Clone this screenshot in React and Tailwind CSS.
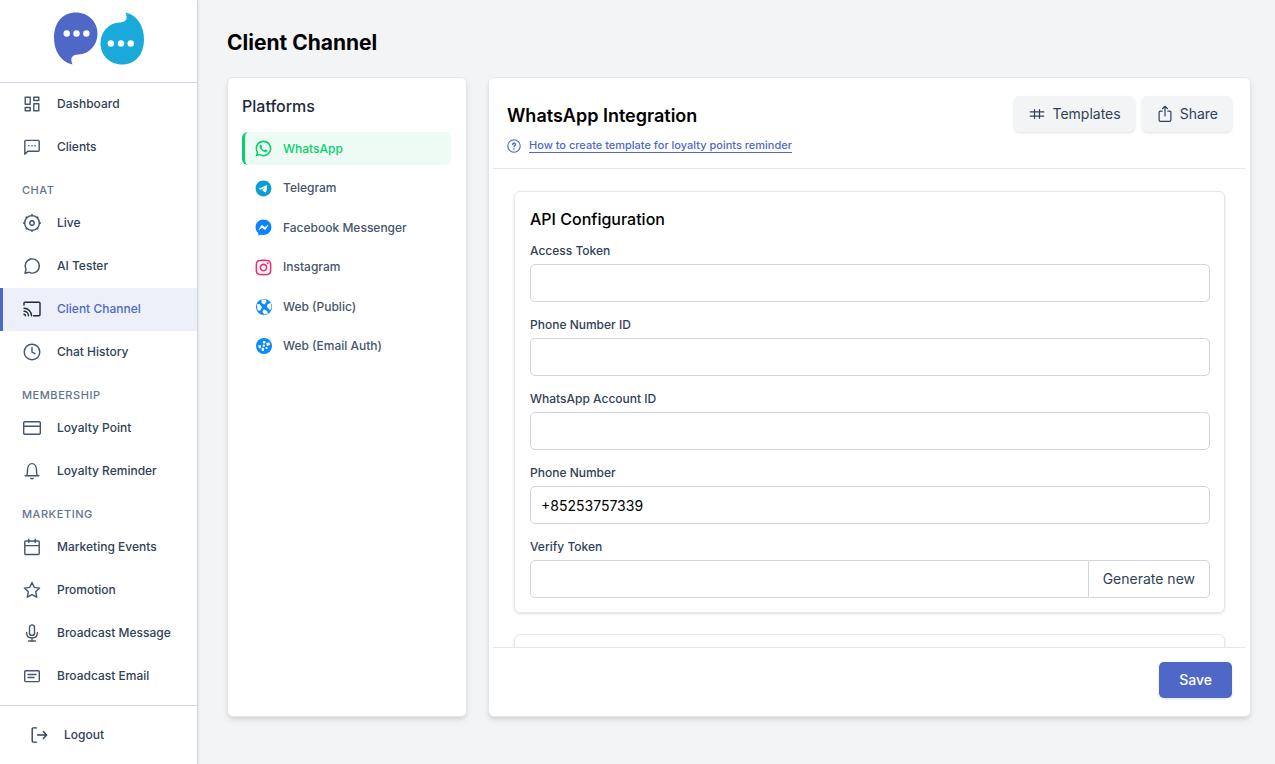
import { useState } from 'react';
import { RiWhatsappLine, RiTelegramFill, RiMessengerFill, RiInstagramLine } from 'react-icons/ri';

function Icon({ children, size = 18 }) {
  return (
    <svg width={size} height={size} viewBox="0 0 18 18" fill="none" stroke="currentColor" strokeWidth="1.4" strokeLinecap="round" strokeLinejoin="round" className="shrink-0" aria-hidden="true">
      {children}
    </svg>
  );
}

const DashboardIcon = () => (
  <Icon>
    <path d="M2.2 2.2h5v7h-5zM10.8 2.2h5v3.3h-5zM10.8 8.8h5v7h-5zM2.2 12.5h5v3.3h-5z" />
  </Icon>
);

const ClientsIcon = () => (
  <Icon>
    <path d="M1.8 16.2V3.4c0-.6.4-1 1-1h12.4c.6 0 1 .4 1 1v8.8c0 .6-.4 1-1 1H4.8z" />
    <path d="M5.8 7.8h.2M8.9 7.8h.2M12 7.8h.2" />
  </Icon>
);

const LiveIcon = () => (
  <Icon>
    <circle cx="9" cy="9" r="7.4" />
    <circle cx="9" cy="9" r="2.2" />
    <path strokeWidth="1.8" d="M9 .9v.6M9 16.5v.6M.9 9h.6M16.5 9h.6M3.3 3.3l.3.3M14.4 14.4l.3.3M14.7 3.3l-.3.3M3.6 14.4l-.3.3" />
  </Icon>
);

const TesterIcon = () => (
  <Icon>
    <path d="M2 16.2l1-3.8A7.1 7.1 0 1 1 5.8 15.2z" />
  </Icon>
);

const CastIcon = () => (
  <Icon>
    <path d="M1 5V3.3c0-.6.4-1 1-1h14c.6 0 1 .4 1 1v11.4c0 .6-.4 1-1 1h-5.5" />
    <path d="M1 8.2a7.5 7.5 0 0 1 7.5 7.5M1 11.3a4.4 4.4 0 0 1 4.4 4.4M1 14.3a1.5 1.5 0 0 1 1.4 1.4" />
  </Icon>
);

const HistoryIcon = () => (
  <Icon>
    <circle cx="9" cy="9" r="7.8" />
    <path d="M9 4.5V9.2l3 1.5" />
  </Icon>
);

const CardIcon = () => (
  <Icon>
    <rect x="0.7" y="2.7" width="16.6" height="12.6" rx="1" />
    <path d="M.7 7.2h16.6" />
  </Icon>
);

const BellIcon = () => (
  <Icon>
    <path d="M2.2 13.7h13.6M3.9 13.5c.6-1.7.6-3.5.6-5.5C4.5 4 6.5 1.6 9 1.6S13.5 4 13.5 8c0 2 0 3.800.6 5.500M7.700 16.300c.7.500 1.900.5 2.600 0" />
  </Icon>
);

const CalendarIcon = () => (
  <Icon>
    <rect x="1.8" y="3" width="14.4" height="13.5" rx="1" />
    <path d="M1.8 7.6h14.4M5.8 1.2v3.4M12.2 1.2v3.4" />
  </Icon>
);

const StarIcon = () => (
  <Icon>
    <path d="M9 1.5l2.3 4.9 5.3.7-3.9 3.7 1 5.4L9 13.600l-4.700 2.600 1-5.400L1.400 7.100l5.300-.7z" />
  </Icon>
);

const MicIcon = () => (
  <Icon>
    <rect x="6.5" y=".9" width="5" height="10.6" rx="2.5" />
    <path d="M3.6 8.5c0 3.7 2.1 5.5 5.4 5.5s5.4-1.800 5.400-5.500M9 14v2.800M5.600 17h6.800" />
  </Icon>
);

const EmailIcon = () => (
  <Icon>
    <rect x="1.7" y="3.7" width="14.6" height="10.9" rx="1" />
    <path d="M5 7.5h8M5 10.5h6" />
  </Icon>
);

const LogoutIcon = () => (
  <Icon>
    <path d="M6.5 1.9H3.2c-.6 0-1 .4-1 1v12.2c0 .6.4 1 1 1h3.300M7.500 9h9M13.300 5.600L16.700 9l-3.400 3.400" />
  </Icon>
);

const TemplatesIcon = () => (
  <Icon>
    <path strokeWidth="1.2" d="M2.2 6.9h13.6M2.2 11.1h13.6M6.5 4.7v8.6M11.5 4.7v8.6" />
  </Icon>
);

const ShareIcon = () => (
  <Icon>
    <path strokeWidth="1.2" d="M6.2 6.1H4.4c-.8 0-1.3.5-1.3 1.3v7.7c0 .8.5 1.3 1.3 1.3h9.2c.8 0 1.3-.5 1.300-1.300V7.400c0-.8-.5-1.300-1.300-1.300h-1.800M9 11V1.400M6.500 3.700L9 1.300l2.500 2.400" />
  </Icon>
);

const HelpIcon = () => (
  <Icon size={14}>
    <circle cx="9" cy="9" r="8" />
    <path strokeWidth="1.8" d="M7.2 7.2c0-2.3 3.7-2.1 3.7 0 0 1.3-1.900 1.300-1.900 2.700M9 12.500v.2" />
  </Icon>
);

const WebPublicIcon = () => (
  <svg width="16" height="16" viewBox="0 0 16 16" aria-hidden="true">
    <circle cx="8" cy="8" r="8" fill="#0a8bf5" />
    <g fill="#fff">
      <path d="M5.5.6L9.5.6 10.8 2.6 8.3 5.6 5.6 4z" />
      <path d="M.9 5.3l2.6-.3 2.6 3.6L4 12 1.5 11z" />
      <path d="M11.6 5.3l3-1.6.9 5-1.5 2.5-3.3-3.4z" />
      <path d="M7.9 10.3l3.2 1.7.9 2.4-3.7 1-1.900-2.600z" />
    </g>
  </svg>
);

const WebEmailIcon = () => (
  <svg width="16" height="16" viewBox="0 0 16 16" aria-hidden="true">
    <circle cx="8" cy="8" r="8" fill="#0a8bf5" />
    <g fill="#fff">
      <rect x="6.9" y="3" width="2.6" height="2.6" rx=".8" />
      <rect x="6.6" y="6.4" width="2.3" height="2.3" rx=".8" />
      <path d="M2.2 7.3h2.9l-.3 2.9H3z" />
      <rect x="5.6" y="9.7" width="2.5" height="3.2" rx=".8" />
      <path d="M10.2 5l3.4-.8.2 2.8-3 .9z" />
      <path d="M9.4 9.2l2-.3.3 1.9-1.9.2z" />
    </g>
  </svg>
);

const Logo = () => (
  <svg width="90" height="53" viewBox="0 0 90 52" role="img" aria-label="Logo">
    <path fill="#4f68c8" d="M22 0C34 0 43.5 9 43.5 21S35 41.5 24.5 42C17.5 42.5 16 45.5 18.5 52 7 49.5 0 38.5 0 25.5 0 10 8.5 0 22 0z" />
    <path fill="#19aadb" transform="rotate(180 45 26)" d="M22 0C34 0 43.5 9 43.5 21S35 41.5 24.5 42C17.5 42.5 16 45.5 18.5 52 7 49.5 0 38.5 0 25.5 0 10 8.5 0 22 0z" />
    <g fill="#fff">
      <circle cx="12.7" cy="21" r="3.2" />
      <circle cx="22.5" cy="21" r="3.2" />
      <circle cx="32.4" cy="21" r="3.2" />
      <circle cx="56.8" cy="31" r="3.2" />
      <circle cx="67" cy="31" r="3.2" />
      <circle cx="76.7" cy="31" r="3.2" />
    </g>
  </svg>
);

const navGroups = [
  {
    items: [
      { name: 'Dashboard', icon: DashboardIcon },
      { name: 'Clients', icon: ClientsIcon },
    ],
  },
  {
    title: 'CHAT',
    items: [
      { name: 'Live', icon: LiveIcon },
      { name: 'AI Tester', icon: TesterIcon },
      { name: 'Client Channel', icon: CastIcon, active: true },
      { name: 'Chat History', icon: HistoryIcon },
    ],
  },
  {
    title: 'MEMBERSHIP',
    items: [
      { name: 'Loyalty Point', icon: CardIcon },
      { name: 'Loyalty Reminder', icon: BellIcon },
    ],
  },
  {
    title: 'MARKETING',
    items: [
      { name: 'Marketing Events', icon: CalendarIcon },
      { name: 'Promotion', icon: StarIcon },
      { name: 'Broadcast Message', icon: MicIcon },
      { name: 'Broadcast Email', icon: EmailIcon },
    ],
  },
];

const platforms = [
  { name: 'WhatsApp', icon: <RiWhatsappLine size={19} className="text-[#07cf6b]" /> },
  { name: 'Telegram', icon: <RiTelegramFill size={19} className="text-[#0a9dd3]" /> },
  { name: 'Facebook Messenger', icon: <RiMessengerFill size={19} className="text-[#0a84ff]" /> },
  { name: 'Instagram', icon: <RiInstagramLine size={19} className="text-[#ee2f6c]" /> },
  { name: 'Web (Public)', icon: <WebPublicIcon /> },
  { name: 'Web (Email Auth)', icon: <WebEmailIcon /> },
];

const fields = [
  { name: 'accessToken', label: 'Access Token' },
  { name: 'phoneNumberId', label: 'Phone Number ID' },
  { name: 'accountId', label: 'WhatsApp Account ID' },
  { name: 'phoneNumber', label: 'Phone Number' },
];

function Sidebar() {
  return (
    <aside className="flex w-[198px] shrink-0 flex-col border-r border-slate-300 bg-white shadow-sm">
      <div className="flex h-[83px] shrink-0 justify-center border-b border-slate-300 pt-3">
        <Logo />
      </div>
      <nav className="min-h-0 flex-1 overflow-y-auto [scrollbar-width:none]">
        {navGroups.map((group, i) => (
          <div key={i}>
            {group.title && (
              <h3 className="flex h-[33px] items-center px-[22px] pt-[10px] text-[11px] font-medium tracking-wider text-slate-500">{group.title}</h3>
            )}
            {group.items.map(({ name, icon: NavIcon, active }) => (
              <a
                key={name}
                href="#"
                className={`flex h-[43px] items-center gap-4 border-l-3 pb-px pl-5 text-xs font-medium ${
                  active ? 'border-[#4f68c8] bg-[#edf0f9]' : 'border-transparent'
                }`}
              >
                <span className={active ? 'text-slate-800' : 'text-slate-600'}><NavIcon /></span>
                <span className={active ? 'text-[#4f68c8]' : 'text-slate-700'}>{name}</span>
              </a>
            ))}
          </div>
        ))}
      </nav>
      <div className="flex h-[59px] shrink-0 items-center border-t border-gray-300 pl-[30px]">
        <button type="button" className="flex items-center gap-4 text-xs font-medium text-slate-700">
          <LogoutIcon />
          Logout
        </button>
      </div>
    </aside>
  );
}

export default function App() {
  const [selected, setSelected] = useState('WhatsApp');
  const [form, setForm] = useState({
    accessToken: '',
    phoneNumberId: '',
    accountId: '',
    phoneNumber: '+85253757339',
    verifyToken: '',
  });

  const handleChange = (e) => {
    setForm({ ...form, [e.target.name]: e.target.value });
  };

  return (
    <div className="flex h-screen bg-[#f3f4f6] font-['Inter',sans-serif]">
      <Sidebar />

      <main className="flex min-w-0 flex-1 flex-col pt-[26px] pr-6 pb-[47px] pl-[29px]">
        <h1 className="mb-[17px] text-[21px] leading-[34px] font-bold text-black">Client Channel</h1>

        <div className="flex min-h-0 flex-1 gap-[21px]">
          {/* Platforms */}
          <section className="w-[240px] shrink-0 rounded-md border border-gray-200 bg-white pt-[14px] pr-[15px] pl-[14px] shadow-md">
            <h2 className="text-base leading-7 font-medium text-slate-800">Platforms</h2>
            <div className="mt-3 flex h-[231px] flex-col justify-between">
              {platforms.map((p) => (
                <button
                  key={p.name}
                  type="button"
                  onClick={() => setSelected(p.name)}
                  className={`flex h-[33px] w-full items-center gap-[10px] rounded-md border-l-3 pl-[9px] text-xs font-medium ${
                    selected === p.name
                      ? 'border-[#07cf6b] bg-[#eefbf4] text-[#07cf6b]'
                      : 'border-transparent text-slate-600'
                  }`}
                >
                  <span className="flex w-[19px] justify-center">{p.icon}</span>
                  {p.name}
                </button>
              ))}
            </div>
          </section>

          {/* Integration */}
          <section className="flex min-w-0 flex-1 flex-col rounded-md border border-gray-200 bg-white px-1 shadow-md">
            <div className="flex h-[91px] shrink-0 justify-between border-b border-gray-200 px-[14px] pt-[18px]">
              <div>
                <h2 className="pt-0.5 text-lg leading-9 font-semibold text-black">WhatsApp Integration</h2>
                <div className="mt-[5px] flex items-center gap-2 text-[#4f68c8]">
                  <HelpIcon />
                  <a href="#" className="border-b border-[#4f68c8] text-[11px] leading-[13px] font-medium">
                    How to create template for loyalty points reminder
                  </a>
                </div>
              </div>
              <div className="flex h-9 gap-[7px]">
                <button type="button" className="flex items-center gap-1.5 rounded-md bg-[#f3f4f6] px-[14px] text-sm text-slate-700 shadow-sm">
                  <TemplatesIcon />
                  Templates
                </button>
                <button type="button" className="flex items-center gap-1.5 rounded-md bg-[#f3f4f6] px-[14px] text-sm text-slate-700 shadow-sm">
                  <ShareIcon />
                  Share
                </button>
              </div>
            </div>

            <form id="whatsapp-form" onSubmit={(e) => e.preventDefault()} className="min-h-0 flex-1 overflow-y-auto px-[21px] pt-[22px] [scrollbar-width:none]">
              <div className="rounded-md border border-gray-200 pt-[13px] pr-[14px] pb-[14px] pl-[15px] shadow-sm">
                <h3 className="mb-2 text-base leading-7 font-medium text-black">API Configuration</h3>
                {fields.map((f) => (
                  <div key={f.name} className="mb-[13px]">
                    <label htmlFor={f.name} className="block pb-[3px] text-xs leading-5 font-medium text-slate-700">{f.label}</label>
                    <input
                      id={f.name}
                      name={f.name}
                      type="text"
                      value={form[f.name]}
                      onChange={handleChange}
                      className="block h-[38px] w-full rounded-[5px] border border-gray-300 px-[10px] text-sm text-black"
                    />
                  </div>
                ))}
                <label htmlFor="verifyToken" className="block pb-[3px] text-xs leading-5 font-medium text-slate-700">Verify Token</label>
                <div className="flex h-[38px]">
                  <input
                    id="verifyToken"
                    name="verifyToken"
                    type="text"
                    value={form.verifyToken}
                    onChange={handleChange}
                    className="min-w-0 flex-1 rounded-l-[5px] border border-gray-300 px-[10px] text-sm text-black"
                  />
                  <button type="button" className="rounded-r-[5px] border border-l-0 border-gray-300 px-[14px] text-sm text-slate-700">
                    Generate new
                  </button>
                </div>
              </div>
              <div className="mt-[21px] h-40 rounded-md border border-gray-200 shadow-sm" />
            </form>

            <div className="flex h-[69px] shrink-0 justify-end border-t border-gray-200 px-[14px] pt-[14px]">
              <button type="submit" form="whatsapp-form" className="h-9 rounded-[5px] bg-[#4f68c8] px-5 text-sm font-medium text-white shadow-sm">
                Save
              </button>
            </div>
          </section>
        </div>
      </main>
    </div>
  );
}
